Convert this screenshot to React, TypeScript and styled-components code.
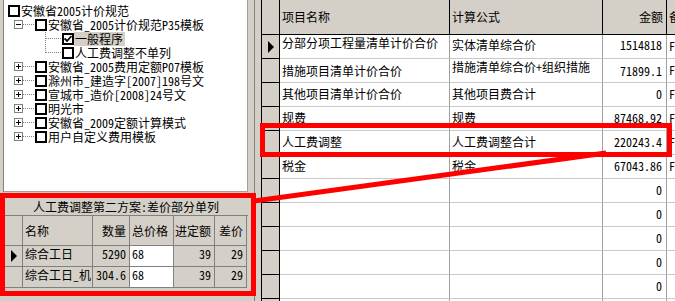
import React from "react";
import styled, { createGlobalStyle } from "styled-components";

const FONT = `"Noto Sans Mono CJK SC", "Noto Sans CJK SC", "Noto Sans", sans-serif`;
const GRAY = "#d4d0c8";

const Global = createGlobalStyle`
  html, body { margin: 0; padding: 0; background: ${GRAY}; }
  body { font-family: ${FONT}; font-size: 12px; color: #000; overflow: hidden; }
  * { box-sizing: border-box; }
`;

const Screen = styled.div`
  position: relative;
  width: 675px;
  height: 301px;
  display: flex;
  overflow: hidden;
  background: ${GRAY};
`;

/* ---------- left pane ---------- */
const LeftPane = styled.div`
  width: 248px;
  flex-shrink: 0;
  display: flex;
  flex-direction: column;
`;

const TreeBox = styled.div`
  height: 192px;
  margin-left: 3px;
  background: #fff;
  border-left: 1px solid #808080;
  border-right: 1px solid #a0a0a0;
  border-bottom: 1px solid #a0a0a0;
  padding: 4px 0 0 0;
`;

const TreeRow = styled.div<{ $indent: number }>`
  height: 14px;
  line-height: 14px;
  display: flex;
  align-items: center;
  padding-left: ${(p) => p.$indent}px;
  white-space: nowrap;
  overflow: visible;
`;

const Check = styled.span`
  width: 12px;
  height: 12px;
  border: 2px solid #000;
  background: #fff;
  display: inline-flex;
  align-items: center;
  justify-content: center;
  flex-shrink: 0;
`;

const Label = styled.span<{ $selected?: boolean }>`
  line-height: 14px;
  height: 14px;
  padding: 0 2px 0 1px;
  background: ${(p) => (p.$selected ? GRAY : "transparent")};
`;

const BottomPanel = styled.div`
  flex: 1;
  padding: 5px 0 0 4px;
  display: flex;
  flex-direction: column;
`;

const PanelTitle = styled.div`
  height: 19px;
  border-bottom: 1px solid #808080;
  display: flex;
  align-items: center;
  justify-content: center;
  white-space: nowrap;
`;

const MiniGrid = styled.div`
  display: grid;
  grid-template-columns: 18px 70px 37px 44px 41px 32px;
  grid-template-rows: 30px 21px 21px;
  border-left: 1px solid #808080;
  width: max-content;
`;

const MiniCell = styled.div<{ $align?: "left" | "right"; $white?: boolean; $head?: boolean }>`
  background: ${(p) => (p.$white ? "#fff" : GRAY)};
  border-right: 1px solid #808080;
  border-bottom: 1px solid #808080;
  display: flex;
  align-items: ${(p) => (p.$head ? "center" : "flex-start")};
  justify-content: ${(p) => (p.$align === "right" ? "flex-end" : "flex-start")};
  padding: ${(p) => (p.$head ? "0 3px 0 2px" : "1px 3px 0 2px")};
  line-height: 14px;
  white-space: nowrap;
  overflow: hidden;
`;

const MiniIndicator = styled.div`
  background: ${GRAY};
  border-right: 1px solid #808080;
  border-bottom: 1px solid #808080;
  display: flex;
  align-items: center;
  justify-content: center;
`;

/* ---------- right pane ---------- */
const Splitter = styled.div`
  width: 6px;
  flex-shrink: 0;
`;

const RightPane = styled.div`
  flex: 1;
  border-left: 1px solid #808080;
  padding-left: 6px;
  overflow: hidden;
  display: flex;
  align-items: flex-start;
`;

const MainGrid = styled.div`
  display: grid;
  grid-template-columns: 18px 170px 153px 64px 80px;
  grid-template-rows: 35px repeat(12, 24px);
  border-left: 1px solid #000;
  flex-shrink: 0;
`;

const HeadCell = styled.div<{ $align?: "left" | "right" }>`
  background: ${GRAY};
  border-right: 1px solid #000;
  border-bottom: 1px solid #000;
  display: flex;
  align-items: center;
  justify-content: ${(p) => (p.$align === "right" ? "flex-end" : "flex-start")};
  padding: 0 3px 1px 2px;
  white-space: nowrap;
  overflow: hidden;
`;

const Indicator = styled.div`
  background: ${GRAY};
  border-right: 1px solid #000;
  border-bottom: 1px solid #000;
  display: flex;
  align-items: center;
  justify-content: center;
`;

const DataCell = styled.div<{ $align?: "left" | "right"; $lift?: number }>`
  background: #fff;
  border-right: 1px solid #a0a0a0;
  border-bottom: 1px solid #c8c8c8;
  display: flex;
  align-items: center;
  justify-content: ${(p) => (p.$align === "right" ? "flex-end" : "flex-start")};
  padding: 0 4px ${(p) => (p.$lift ?? 1) * 2}px 2px;
  white-space: nowrap;
  overflow: hidden;
`;

const Overlay = styled.svg`
  position: absolute;
  left: 0;
  top: 0;
  pointer-events: none;
`;

/* ---------- drawings ---------- */
const Arrow = () => (
  <svg width="6" height="12" viewBox="0 0 6 12">
    <path d="M0 0 L6 6 L0 12 Z" fill="#000" />
  </svg>
);

const Tick = () => (
  <svg width="8" height="8" viewBox="0 0 8 8">
    <path d="M0.5 3.5 L3 6 L7.5 1" stroke="#000" strokeWidth="1.8" fill="none" />
  </svg>
);

const Expander = ({ open }: { open: boolean }) => (
  <svg width="21" height="14" viewBox="0 0 21 14" style={{ flexShrink: 0 }}>
    <rect x="0.5" y="2.5" width="8" height="8" fill="#fff" stroke="#808080" />
    <line x1="2" y1="6.5" x2="7" y2="6.5" stroke="#000" />
    {!open && <line x1="4.5" y1="4" x2="4.5" y2="9" stroke="#000" />}
    <line x1="9" y1="6.5" x2="21" y2="6.5" stroke="#808080" strokeDasharray="1 1" />
  </svg>
);

const Branch = ({ last }: { last?: boolean }) => (
  <svg width="17" height="14" viewBox="0 0 17 14" style={{ flexShrink: 0 }}>
    <line x1="0.5" y1="0" x2="0.5" y2={last ? 7 : 14} stroke="#808080" strokeDasharray="1 1" />
    <line x1="1" y1="6.5" x2="17" y2="6.5" stroke="#808080" strokeDasharray="1 1" />
  </svg>
);

/* ---------- data ---------- */
type TreeItem = {
  level: 0 | 1 | 2;
  text: string;
  open?: boolean;
  checked?: boolean;
  selected?: boolean;
  last?: boolean;
};

const tree: TreeItem[] = [
  { level: 0, text: "安徽省2005计价规范" },
  { level: 1, text: "安徽省_2005计价规范P35模板", open: true },
  { level: 2, text: "一般程序", checked: true, selected: true },
  { level: 2, text: "人工费调整不单列", last: true },
  { level: 1, text: "安徽省_2005费用定额P07模板" },
  { level: 1, text: "滁州市_建造字[2007]198号文" },
  { level: 1, text: "宣城市_造价[2008]24号文" },
  { level: 1, text: "明光市" },
  { level: 1, text: "安徽省_2009定额计算模式" },
  { level: 1, text: "用户自定义费用模板" },
];

/* x position (page pixels) where each level's first element starts; tree white begins at x=4 */
const levelStart = [8, 14, 45];

type Row = { name: string; calc: string; amount: string; note: string; lift?: [number, number, number] };

const rows: Row[] = [
  { name: "分部分项工程量清单计价合价", calc: "实体清单综合价", amount: "1514818", note: "F", lift: [4, 2, 2] },
  { name: "措施项目清单计价合价", calc: "措施清单综合价+组织措施", amount: "71899.1", note: "F", lift: [0, 4, 0] },
  { name: "其他项目清单计价合价", calc: "其他项目费合计", amount: "0", note: "F" },
  { name: "规费", calc: "规费", amount: "87468.92", note: "F" },
  { name: "人工费调整", calc: "人工费调整合计", amount: "220243.4", note: "F" },
  { name: "税金", calc: "税金", amount: "67043.86", note: "F" },
  { name: "", calc: "", amount: "0", note: "" },
  { name: "", calc: "", amount: "0", note: "" },
  { name: "", calc: "", amount: "0", note: "" },
  { name: "", calc: "", amount: "0", note: "" },
  { name: "", calc: "", amount: "0", note: "" },
  { name: "", calc: "", amount: "", note: "" },
];

const mini = [
  { name: "综合工日", qty: "5290", total: "68", base: "39", diff: "29" },
  { name: "综合工日_机", qty: "304.6", total: "68", base: "39", diff: "29" },
];

export default function App() {
  return (
    <>
      <Global />
      <Screen>
        <LeftPane>
          <TreeBox>
            {tree.map((t, i) => (
              <TreeRow key={i} $indent={levelStart[t.level] - 4}>
                {t.level === 1 && <Expander open={!!t.open} />}
                {t.level === 2 && <Branch last={t.last} />}
                <Check>{t.checked && <Tick />}</Check>
                <Label $selected={t.selected}>{t.text}</Label>
              </TreeRow>
            ))}
          </TreeBox>
          <BottomPanel>
            <PanelTitle>人工费调整第二方案:差价部分单列</PanelTitle>
            <MiniGrid>
              <MiniIndicator />
              <MiniCell $head>名称</MiniCell>
              <MiniCell $head $align="right">数量</MiniCell>
              <MiniCell $head>总价格</MiniCell>
              <MiniCell $head $align="right">进定额</MiniCell>
              <MiniCell $head $align="right">差价</MiniCell>
              {mini.map((m, i) => (
                <React.Fragment key={i}>
                  <MiniIndicator>{i === 0 && <Arrow />}</MiniIndicator>
                  <MiniCell>{m.name}</MiniCell>
                  <MiniCell $align="right">{m.qty}</MiniCell>
                  <MiniCell $white>{m.total}</MiniCell>
                  <MiniCell $align="right">{m.base}</MiniCell>
                  <MiniCell $align="right">{m.diff}</MiniCell>
                </React.Fragment>
              ))}
            </MiniGrid>
          </BottomPanel>
        </LeftPane>
        <Splitter />
        <RightPane>
          <MainGrid>
            <Indicator />
            <HeadCell>项目名称</HeadCell>
            <HeadCell>计算公式</HeadCell>
            <HeadCell $align="right">金额</HeadCell>
            <HeadCell>备注</HeadCell>
            {rows.map((r, i) => (
              <React.Fragment key={i}>
                <Indicator>{i === 0 && <Arrow />}</Indicator>
                <DataCell $lift={r.lift ? r.lift[0] : 1}>{r.name}</DataCell>
                <DataCell $lift={r.lift ? r.lift[1] : 1}>{r.calc}</DataCell>
                <DataCell $align="right" $lift={r.lift ? r.lift[2] : 1}>{r.amount}</DataCell>
                <DataCell $lift={1}>{r.note}</DataCell>
              </React.Fragment>
            ))}
          </MainGrid>
        </RightPane>
        <Overlay width="675" height="301" viewBox="0 0 675 301">
          <rect x="2.5" y="195.5" width="251" height="98" fill="none" stroke="#ff0000" strokeWidth="5" />
          <rect x="262.5" y="125.5" width="407" height="29" fill="none" stroke="#ff0000" strokeWidth="5" />
          <line x1="254" y1="201" x2="606" y2="153" stroke="#ff0000" strokeWidth="5" />
        </Overlay>
      </Screen>
    </>
  );
}
